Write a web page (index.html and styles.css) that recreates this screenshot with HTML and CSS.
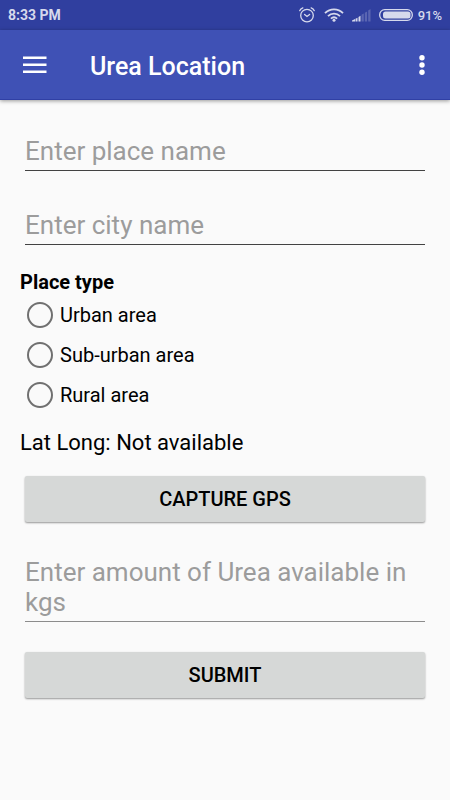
FILE: index.html
```html
<!DOCTYPE html>
<html lang="en">
<head>
    <meta charset="UTF-8">
    <meta name="viewport" content="width=device-width, initial-scale=1.0">
    <title>Urea Location</title>
    <link rel="stylesheet" href="styles.css">
</head>
<body>
    <div class="status-bar">
        <span class="clock">8:33 PM</span>
        <div class="status-icons">
            <svg width="16" height="16" viewBox="0 0 16 16" fill="none" stroke="currentColor" stroke-width="1.3" stroke-linecap="round">
                <circle cx="8" cy="8.6" r="6.3"/>
                <path d="M5.6 7.4 8 9.4l2.600-2M.7 3.700C1.300 2.300 2.400 1.300 3.800.800M15.300 3.700C14.700 2.300 13.600 1.300 12.200.800"/>
            </svg>
            <svg class="wifi" width="20" height="14" viewBox="0 0 20 14" fill="none" stroke="currentColor" stroke-width="1.8">
                <path d="M1 5.200C6 .100 14 .100 19 5.200M4 8.100c3.300-3.400 8.700-3.400 12 0M6.900 10.700c1.800-1.700 4.400-1.700 6.200 0"/>
                <circle cx="10" cy="12.300" r="1.500" fill="currentColor" stroke="none"/>
            </svg>
            <svg class="signal" width="19" height="14" viewBox="0 0 19 14" fill="currentColor">
                <path d="M0 13.500V12.500L3 11v2.500zM3.500 13.500V10.800L5.500 9.800v3.700zM6.500 13.500V9L8.500 7.800v5.700z"/>
                <path opacity=".25" d="M9.500 13.500V6.800l2.300-1.300v8zM12.800 13.500V4.800l2.300-1.300v10zM16.200 13.500V2.500L18.500 1v12.500z"/>
            </svg>
            <svg class="battery" width="34" height="12" viewBox="0 0 34 12">
                <rect x=".7" y=".7" width="32.600" height="10.600" rx="5" fill="none" stroke="currentColor" stroke-width="1.300"/>
                <rect x="4" y="2.500" width="27.500" height="7" rx="2.500" fill="currentColor"/>
            </svg>
            <span class="percent">91%</span>
        </div>
    </div>

    <header class="app-bar">
        <button class="icon-button" type="button" aria-label="Open menu">
            <svg width="24" height="18" viewBox="0 0 24 18" fill="currentColor">
                <path d="M0 .5h23.500v2.600H0zM0 7.500h23.500v2.600H0zM0 14.500h23.500v2.600H0z"/>
            </svg>
        </button>
        <h1 class="title">Urea Location</h1>
        <button class="icon-button" type="button" aria-label="More options">
            <svg width="6" height="20" viewBox="0 0 6 20" fill="currentColor">
                <circle cx="3" cy="2.700" r="2.700"/>
                <circle cx="3" cy="10" r="2.700"/>
                <circle cx="3" cy="17.300" r="2.700"/>
            </svg>
        </button>
    </header>

    <form class="urea-form">
        <input class="field" type="text" name="place" placeholder="Enter place name" aria-label="Place name">
        <input class="field" type="text" name="city" placeholder="Enter city name" aria-label="City name">

        <fieldset class="place-type">
            <legend>Place type</legend>
            <label class="option"><input type="radio" name="type" value="urban">Urban area</label>
            <label class="option"><input type="radio" name="type" value="suburban">Sub-urban area</label>
            <label class="option"><input type="radio" name="type" value="rural">Rural area</label>
        </fieldset>

        <p class="lat-long">Lat Long: Not available</p>
        <button class="button" type="button">CAPTURE GPS</button>

        <textarea class="field amount" name="amount" rows="2" placeholder="Enter amount of Urea available in kgs" aria-label="Amount of Urea"></textarea>
        <button class="button" type="submit">SUBMIT</button>
    </form>
</body>
</html>
```

FILE: styles.css
```css
* {
    box-sizing: border-box;
}

body {
    margin: 0;
    background-color: #fafafa;
    color: #000;
    font-family: Roboto, sans-serif;
}

svg {
    display: block;
}

.status-bar {
    display: flex;
    justify-content: space-between;
    align-items: center;
    height: 30px;
    padding: 0 8px;
    background-color: #303f9f;
    color: #d6d9ec;
    font-size: 14px;
    font-weight: bold;
}

.status-icons {
    display: flex;
    align-items: center;
}

.wifi {
    margin-left: 9px;
}

.signal {
    margin-left: 8px;
}

.battery {
    margin-left: 8px;
}

.percent {
    margin-left: 5px;
    font-size: 13px;
    font-weight: 500;
}

.app-bar {
    display: flex;
    align-items: center;
    height: 70px;
    padding: 0 17px 0 15px;
    background-color: #3f51b5;
    border-bottom: 1px solid #3040a5;
    box-shadow: 0 1px 4px rgba(0, 0, 0, 0.4);
    color: white;
}

.icon-button {
    padding: 8px;
    border: none;
    background: none;
    color: inherit;
    cursor: pointer;
}

.title {
    flex: 1;
    margin: 4px 0 0 35px;
    font-size: 25px;
    font-weight: 500;
}

.urea-form {
    display: flex;
    flex-direction: column;
    padding: 36px 20px;
}

.field {
    height: 35px;
    margin: 0 5px 39px;
    padding: 0 0 4px;
    border: none;
    border-bottom: 1px solid #424242;
    border-radius: 0;
    outline: none;
    background: none;
    color: #000;
    font-family: inherit;
    font-size: 26px;
    line-height: 30px;
}

.field::placeholder {
    color: #9c9c9c;
    opacity: 1;
}

.field.amount {
    height: 65px;
    margin: 35px 5px 30px;
    border-color: #8c8c8c;
    resize: none;
    overflow: hidden;
}

.place-type {
    margin: -14px 0 0;
    padding: 0;
    border: none;
}

.place-type legend {
    margin-bottom: 1px;
    padding: 0;
    font-size: 20px;
    font-weight: bold;
    line-height: 24px;
}

.option {
    display: flex;
    align-items: center;
    gap: 7px;
    height: 40px;
    padding-left: 7px;
    font-size: 20px;
}

.option input {
    appearance: none;
    width: 26px;
    height: 26px;
    margin: 0;
    border: 2px solid #707070;
    border-radius: 50%;
}

.option input:checked {
    background: radial-gradient(#3f51b5 50%, transparent 55%);
}

.lat-long {
    margin: 14px 0 19px;
    font-size: 22px;
    line-height: 28px;
}

.button {
    height: 46px;
    margin: 0 5px;
    border: none;
    border-radius: 2px;
    background-color: #d6d8d7;
    box-shadow: 0 1px 2px rgba(0, 0, 0, 0.4);
    color: #000;
    font-family: inherit;
    font-size: 20px;
    font-weight: 500;
    cursor: pointer;
}
```
